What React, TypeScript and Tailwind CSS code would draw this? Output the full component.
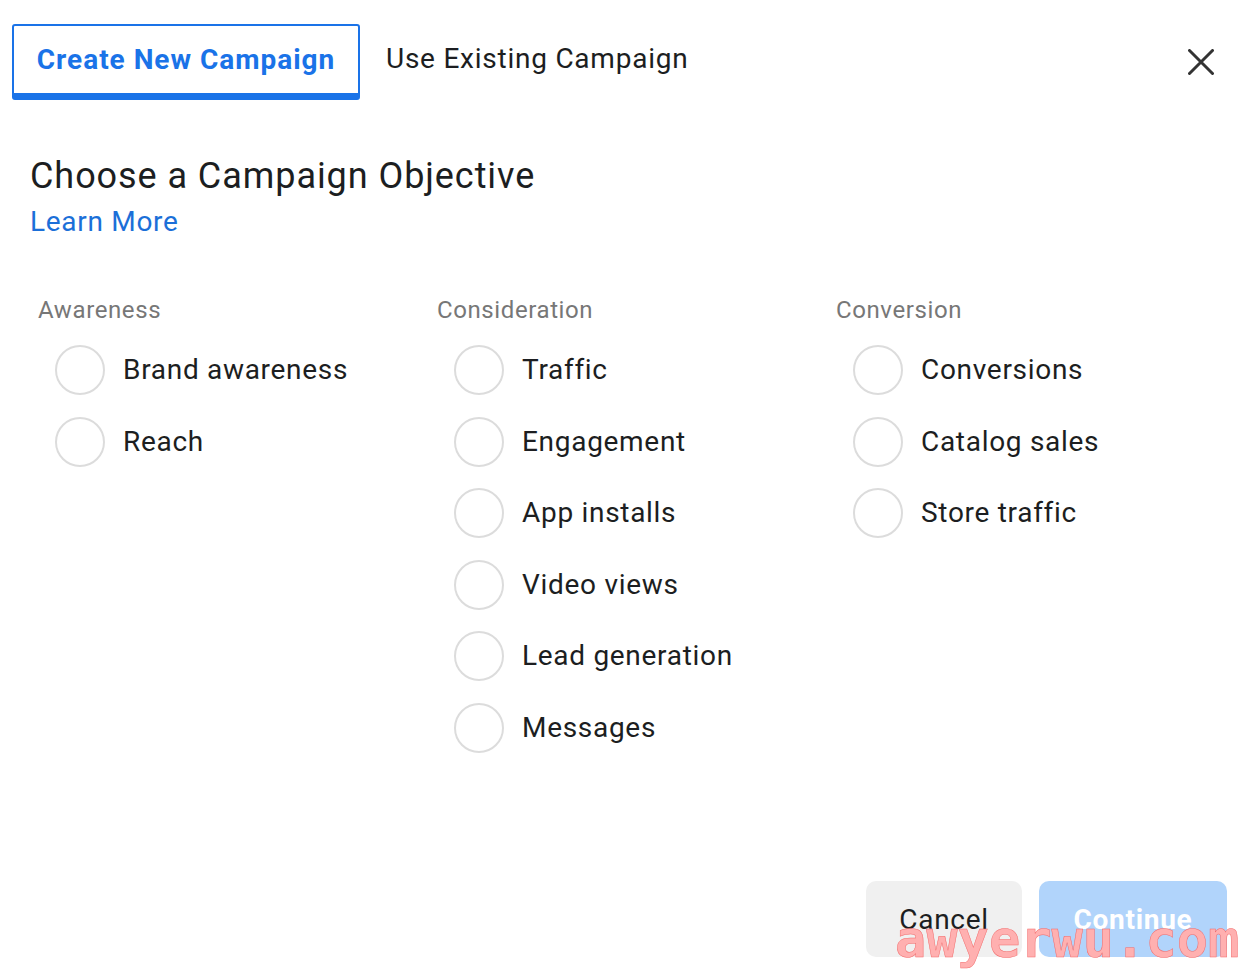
const GROUPS = [
  { title: 'Awareness', items: ['Brand awareness', 'Reach'] },
  {
    title: 'Consideration',
    items: ['Traffic', 'Engagement', 'App installs', 'Video views', 'Lead generation', 'Messages'],
  },
  { title: 'Conversion', items: ['Conversions', 'Catalog sales', 'Store traffic'] },
];

function Radio({ label }: { label: string }) {
  return (
    <label className="flex items-center h-[71.5px] cursor-pointer">
      <span className="ml-[17px] w-[50px] h-[50px] rounded-full border-2 border-[#dcdcdc] bg-white shrink-0" />
      <span className="ml-[18px] text-[28px] leading-[34px] tracking-[0.025em] text-[#1c1e21]">{label}</span>
    </label>
  );
}

export default function App() {
  return (
    <div className="relative w-[1256px] h-[978px] bg-white flex flex-col font-['Roboto',_'Liberation_Sans',_sans-serif] overflow-hidden">
      <div className="flex items-start">
        <button className="ml-[12px] mt-[24px] w-[348px] h-[76px] border-2 border-b-[7px] border-[#1a73e8] rounded-[3px] flex items-center justify-center text-[28px] font-bold text-[#1a73e8] tracking-[0.035em]">
          Create New Campaign
        </button>
        <div className="ml-[26px] mt-[24px] h-[69px] flex items-center text-[28px] tracking-[0.027em] text-[#1c1e21]">
          Use Existing Campaign
        </div>
        <button className="ml-auto mr-[42px] mt-[49px] w-[26px] h-[26px] flex items-center justify-center">
          <svg width="26" height="26" viewBox="0 0 26 26" fill="none">
            <path d="M1.5 1.5 L24.5 24.5 M24.5 1.5 L1.5 24.5" stroke="#333" strokeWidth="3" strokeLinecap="round" />
          </svg>
        </button>
      </div>

      <div className="px-[30px] mt-[55px]">
        <h2 className="text-[36px] leading-[42px] tracking-[0.026em] text-[#1c1e21]">Choose a Campaign Objective</h2>
        <a className="block mt-[8px] w-fit text-[28px] leading-[34px] tracking-[0.025em] text-[#1b6fd8]">Learn More</a>
      </div>

      <div className="grid grid-cols-[399px_399px_399px] pl-[38px] mt-[57px]">
        {GROUPS.map((g) => (
          <div key={g.title} className="flex flex-col">
            <div className="text-[24px] leading-[28px] tracking-[0.025em] text-[#777]">{g.title}</div>
            <div className="mt-[10.5px] flex flex-col">
              {g.items.map((item) => (
                <Radio key={item} label={item} />
              ))}
            </div>
          </div>
        ))}
      </div>

      <div className="flex-1" />

      <div className="flex justify-end gap-[17px] pr-[29px] pb-[21px]">
        <button className="w-[156px] h-[76px] rounded-[10px] bg-[#f0f0f0] text-[28px] tracking-[0.025em] text-[#1c1e21] flex items-center justify-center pt-[2px]">
          Cancel
        </button>
        <button className="w-[188px] h-[76px] rounded-[10px] bg-[#b1d4fb] text-[28px] font-bold tracking-[0.025em] text-white flex items-center justify-center pt-[2px]">
          Continue
        </button>
      </div>

      <span className="absolute left-[895px] top-[909px] pointer-events-none text-[52px] leading-[60px] font-bold text-[#ffb0b0] font-['DejaVu_Sans_Mono',_monospace] [-webkit-text-stroke:0.5px_#f26b6b]">
        awyerwu.com
      </span>
    </div>
  );
}
